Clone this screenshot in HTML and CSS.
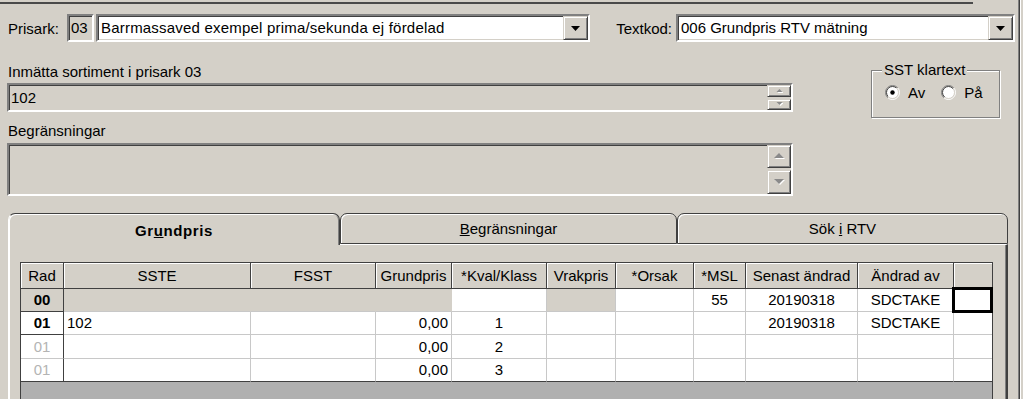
FILE: index.html
```html
<!DOCTYPE html>
<html>
<head>
<meta charset="utf-8">
<link rel="stylesheet" href="styles.css">
</head>
<body>
<div class="screen">
  <div class="main">
    <div class="topline"></div>
    <div class="row1">
      <span class="lbl lbl-prisark">Prisark:</span>
      <div class="sunken code">03</div>
      <div class="sunken combo combo1">
        <span class="combo-text">Barrmassaved exempel prima/sekunda ej fördelad</span>
        <span class="dd-btn"><svg width="9" height="5" viewBox="0 0 9 5"><path d="M0 0H9L4.5 5Z" fill="#000"/></svg></span>
      </div>
      <span class="lbl lbl-textkod">Textkod:</span>
      <div class="sunken combo combo2">
        <span class="combo-text">006 Grundpris RTV mätning</span>
        <span class="dd-btn"><svg width="9" height="5" viewBox="0 0 9 5"><path d="M0 0H9L4.5 5Z" fill="#000"/></svg></span>
      </div>
    </div>
    <div class="row2">
      <div class="fields">
        <div class="flabel first">Inmätta sortiment i prisark 03</div>
        <div class="sunken field f102">
          <span class="ftext">102</span>
          <div class="spin small">
            <span class="sb"><svg width="7" height="4" viewBox="0 0 7 4"><path d="M1.5 4H7.5L4.5 1Z" fill="#fff"/><path d="M0.5 3H6.5L3.5 0Z" fill="#8a8a8a"/></svg></span>
            <span class="sb"><svg width="7" height="4" viewBox="0 0 7 4"><path d="M1.5 1H7.5L4.5 4Z" fill="#fff"/><path d="M0.5 0H6.5L3.5 3Z" fill="#8a8a8a"/></svg></span>
          </div>
        </div>
        <div class="flabel">Begränsningar</div>
        <div class="sunken field fbeg">
          <div class="spin big">
            <span class="sb"><svg width="11" height="7" viewBox="0 0 11 7"><path d="M1 6H11L6 1Z" fill="#fff"/><path d="M0 5H10L5 0Z" fill="#8a8a8a"/></svg></span>
            <span class="sb"><svg width="11" height="7" viewBox="0 0 11 7"><path d="M1 1H11L6 6Z" fill="#fff"/><path d="M0 0H10L5 5Z" fill="#8a8a8a"/></svg></span>
          </div>
        </div>
      </div>
      <div class="group">
        <span class="group-title">SST klartext</span>
        <div class="radios">
          <svg class="radio" width="15" height="15" viewBox="0 0 15 15">
            <defs>
              <linearGradient id="ro" x1="0" y1="0" x2="1" y2="1"><stop offset="0.5" stop-color="#808080"/><stop offset="0.5" stop-color="#ffffff"/></linearGradient>
              <linearGradient id="ri" x1="0" y1="0" x2="1" y2="1"><stop offset="0.5" stop-color="#404040"/><stop offset="0.5" stop-color="#d4d0c8"/></linearGradient>
            </defs>
            <circle cx="7.5" cy="7.5" r="7" fill="none" stroke="url(#ro)" stroke-width="1"/>
            <circle cx="7.5" cy="7.5" r="6" fill="#fff" stroke="url(#ri)" stroke-width="1"/>
            <circle cx="7.5" cy="7.5" r="2.2" fill="#000"/>
          </svg>
          <span class="rtext">Av</span>
          <svg class="radio radio-second" width="15" height="15" viewBox="0 0 15 15">
            <circle cx="7.5" cy="7.5" r="7" fill="none" stroke="url(#ro)" stroke-width="1"/>
            <circle cx="7.5" cy="7.5" r="6" fill="#fff" stroke="url(#ri)" stroke-width="1"/>
          </svg>
          <span class="rtext">På</span>
        </div>
      </div>
    </div>
    <div class="tabs">
      <div class="tab active t1"><b>Gr<u>u</u>ndpris</b></div>
      <div class="tab t2"><span><u>B</u>egränsningar</span></div>
      <div class="tab t3"><span>Sök <u>i</u> RTV</span></div>
    </div>
    <div class="panel">
      <div class="grid">
        <div class="hc">Rad</div>
        <div class="hc">SSTE</div>
        <div class="hc">FSST</div>
        <div class="hc">Grundpris</div>
        <div class="hc">*Kval/Klass</div>
        <div class="hc">Vrakpris</div>
        <div class="hc">*Orsak</div>
        <div class="hc">*MSL</div>
        <div class="hc">Senast ändrad</div>
        <div class="hc">Ändrad av</div>
        <div class="hc last"></div>

        <div class="c rad gray dark-b"><b>00</b></div>
        <div class="c gray nosep"></div>
        <div class="c gray nosep"></div>
        <div class="c gray nosep"></div>
        <div class="c"></div>
        <div class="c gray"></div>
        <div class="c"></div>
        <div class="c ctr">55</div>
        <div class="c ctr">20190318</div>
        <div class="c ctr">SDCTAKE</div>
        <div class="c last focus"></div>

        <div class="c rad dark-b"><b>01</b></div>
        <div class="c left">102</div>
        <div class="c"></div>
        <div class="c right">0,00</div>
        <div class="c ctr">1</div>
        <div class="c"></div>
        <div class="c"></div>
        <div class="c"></div>
        <div class="c ctr">20190318</div>
        <div class="c ctr">SDCTAKE</div>
        <div class="c last"></div>

        <div class="c rad faint row-tall">01</div>
        <div class="c row-tall"></div>
        <div class="c row-tall"></div>
        <div class="c right row-tall">0,00</div>
        <div class="c ctr row-tall">2</div>
        <div class="c row-tall"></div>
        <div class="c row-tall"></div>
        <div class="c row-tall"></div>
        <div class="c row-tall"></div>
        <div class="c row-tall"></div>
        <div class="c last row-tall"></div>

        <div class="c rad faint row-end">01</div>
        <div class="c row-end"></div>
        <div class="c row-end"></div>
        <div class="c right row-end">0,00</div>
        <div class="c ctr row-end">3</div>
        <div class="c row-end"></div>
        <div class="c row-end"></div>
        <div class="c row-end"></div>
        <div class="c row-end"></div>
        <div class="c row-end"></div>
        <div class="c last row-end"></div>
      </div>
    </div>
  </div>
  <div class="rightedge"></div>
</div>
</body>
</html>
```

FILE: styles.css
```css
* { box-sizing: border-box; }
html, body { margin: 0; padding: 0; }
body {
  width: 1023px;
  height: 399px;
  overflow: hidden;
  background: #d4d0c8;
  font-family: "Liberation Sans", Arial, sans-serif;
  font-size: 15px;
  color: #000;
}
.screen { display: flex; height: 399px; }
.main { width: 1018px; flex: none; }
.rightedge {
  flex: 1;
  border-left: 1px solid #808080;
  box-shadow: inset 1px 0 0 #404040, inset 2px 0 0 #ffffff;
}
.topline {
  margin-top: 2px;
  height: 2px;
  width: 973px;
  background: #4a4a4a;
}

/* sunken 3D edge */
.sunken {
  border: 2px solid;
  border-color: #808080 #ffffff #ffffff #808080;
  box-shadow: inset 1px 1px 0 #404040, inset -1px -1px 0 #d4d0c8;
}

/* row 1 */
.row1 {
  display: flex;
  align-items: center;
  margin-top: 10px;
  height: 28px;
  padding-left: 8px;
}
.lbl { white-space: nowrap; }
.lbl-prisark { width: 59px; }
.code {
  width: 27px;
  height: 28px;
  background: #d4d0c8;
  padding-left: 2px;
  line-height: 24px;
}
.combo {
  height: 28px;
  background: #fff;
  display: flex;
}
.combo1 { width: 494px; margin-left: 2px; }
.combo1 .combo-text { letter-spacing: 0.2px; }
.combo2 { width: 339px; }
.lbl-textkod { width: 86px; text-align: right; padding-right: 4px; }
.combo-text {
  flex: 1;
  padding-left: 3px;
  line-height: 24px;
  white-space: nowrap;
  overflow: hidden;
}
.dd-btn {
  width: 25px;
  height: 24px;
  flex: none;
  background: #d4d0c8;
  border: 1px solid;
  border-color: #d4d0c8 #404040 #404040 #d4d0c8;
  box-shadow: inset 1px 1px 0 #fff, inset -1px -1px 0 #808080;
  display: flex;
  align-items: center;
  justify-content: center;
}

/* row 2 */
.row2 { display: flex; align-items: flex-start; }
.fields { width: 786px; margin-left: 7px; flex: none; }
.flabel {
  height: 17px;
  line-height: 17px;
  padding-left: 1px;
  margin-top: 10px;
  white-space: nowrap;
}
.flabel.first { margin-top: 21px; }
.field {
  background: #d4d0c8;
  display: flex;
  justify-content: space-between;
}
.f102 { height: 29px; margin-top: 3px; }
.fbeg { height: 53px; margin-top: 4px; justify-content: flex-end; }
.ftext { padding-left: 2px; line-height: 25px; }
.spin { display: flex; flex-direction: column; width: 24px; flex: none; }
.spin.small { gap: 2px; }
.spin.small .sb { height: 12px; }
.spin.big { gap: 2px; }
.spin.big .sb:first-child { height: 23px; }
.spin.big .sb:last-child { height: 24px; }
.sb {
  display: flex;
  align-items: center;
  justify-content: center;
  background: #d4d0c8;
  border: 1px solid;
  border-color: #d4d0c8 #404040 #404040 #d4d0c8;
  box-shadow: inset 1px 1px 0 #fff, inset -1px -1px 0 #808080;
}

/* group box */
.group {
  position: relative;
  width: 129px;
  height: 48px;
  margin-left: 78px;
  margin-top: 28px;
  border: 1px solid #808080;
  box-shadow: inset 1px 1px 0 #fff, 1px 1px 0 #fff;
}
.group-title {
  position: absolute;
  top: -10px;
  left: 10px;
  padding: 0 2px;
  background: #d4d0c8;
  line-height: 17px;
  white-space: nowrap;
}
.radios {
  display: flex;
  align-items: center;
  padding-top: 14px;
  padding-left: 13px;
  height: 29px;
}
.radio { display: block; flex: none; }
.rtext { margin-left: 8px; line-height: 15px; }
.radio-second { margin-left: 16px; }

/* tabs */
.tabs {
  display: flex;
  align-items: flex-start;
  margin-top: 17px;
  margin-left: 8px;
  width: 1000px;
  height: 31px;
}
.tab {
  height: 31px;
  border: 1px solid #404040;
  border-radius: 7px 7px 0 0;
  box-shadow: inset 1px 1px 0 #fff;
  display: flex;
  align-items: center;
  justify-content: center;
  background: #d4d0c8;
  white-space: nowrap;
}
.t1 { width: 332px; }
.t2 { width: 337px; }
.t3 { width: 331px; }
.tab.active {
  position: relative;
  z-index: 2;
  height: 32px;
  border-bottom: none;
  border-left-color: #ffffff;
  box-shadow: inset 1px 1px 0 #fff, inset -1px 0 0 #808080;
  padding-top: 1px;
}
.tab.active b { letter-spacing: 0.6px; }

/* panel */
.panel {
  margin-left: 8px;
  width: 1000px;
  height: 160px;
  border-top: 1px solid #fff;
  border-left: 2px solid #fff;
  border-right: 2px solid #404040;
  box-shadow: inset -1px 0 0 #808080;
  padding: 17px 0 0 10px;
}
.grid {
  width: 973px;
  height: 150px;
  background: #b0b0b0;
  border: 1px solid #404040;
  border-bottom: none;
  display: grid;
  grid-template-columns: 43px 187px 125px 76px 95px 69px 78px 52px 112px 96px 38px;
  grid-template-rows: 26px 23px 23px 24px 23px;
  align-content: start;
  font-size: 15px;
}
.hc {
  background: #d4d0c8;
  border-right: 1px solid #404040;
  border-bottom: 1px solid #404040;
  text-align: center;
  line-height: 25px;
  white-space: nowrap;
  overflow: hidden;
  box-shadow: inset 1px 1px 0 #fff;
}
.hc.last { border-right: none; }
.c {
  background: #fff;
  border-right: 1px solid #c8c8c8;
  border-bottom: 1px solid #c8c8c8;
  line-height: 22px;
  white-space: nowrap;
}
.c.row-tall { line-height: 23px; }
.c.row-end { border-bottom-color: #404040; }
.c.last { border-right: none; }
.c.rad {
  border-right-color: #404040;
  text-align: center;
}
.c.rad.dark-b { border-bottom-color: #404040; }
.c.gray { background: #d4d0c8; }
.c.nosep { border-right-color: #d4d0c8; }
.c.faint { color: #b4b4b4; }
.c.ctr { text-align: center; }
.c.left { padding-left: 3px; }
.c.right { text-align: right; padding-right: 3px; }
.c.focus { position: relative; }
.c.focus::after {
  content: "";
  position: absolute;
  top: -2px;
  left: -2px;
  right: -1px;
  bottom: -2px;
  border: 3px solid #000;
}
```
